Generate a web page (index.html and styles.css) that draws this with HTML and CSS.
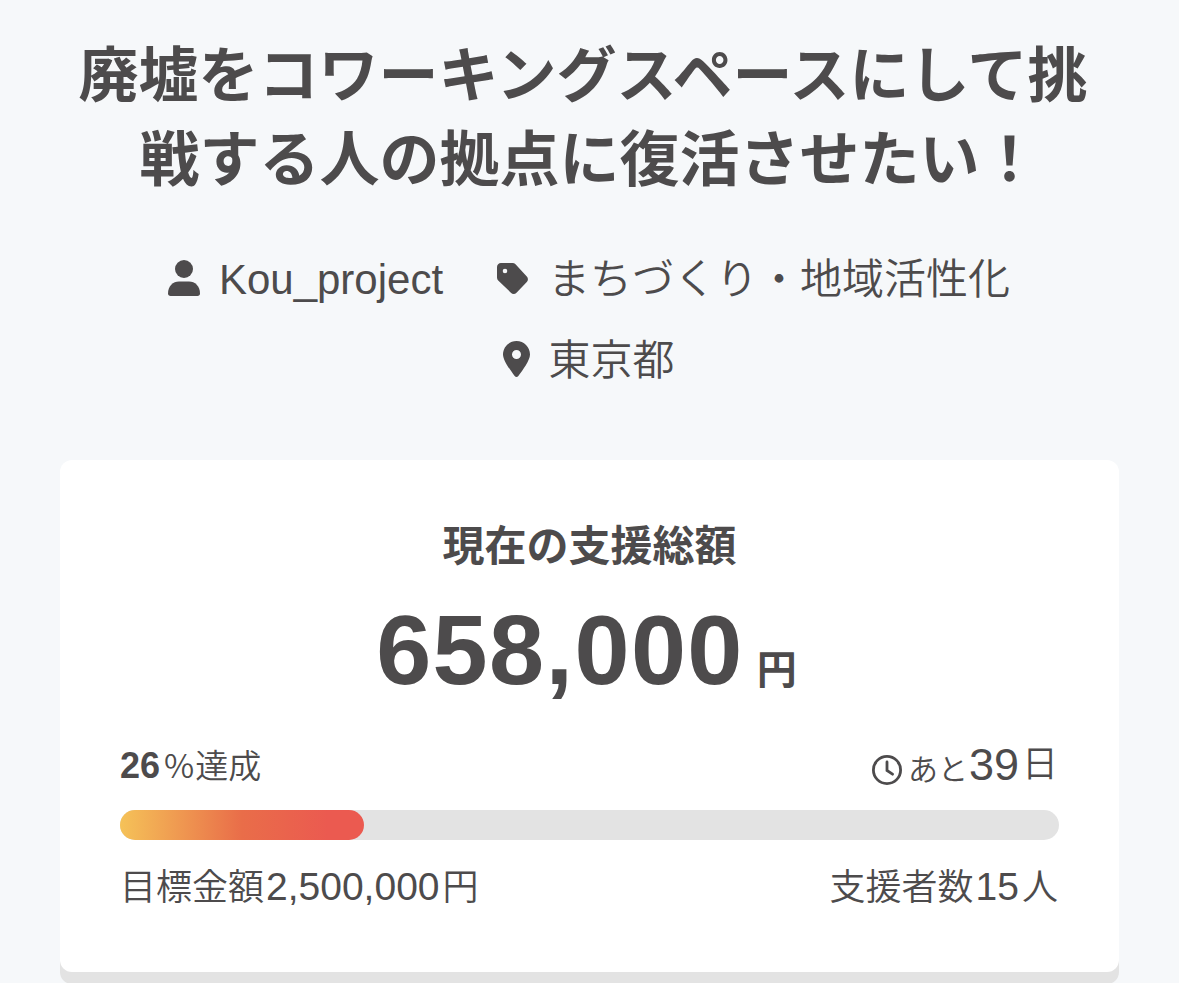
FILE: index.html
```html
<!DOCTYPE html>
<html lang="ja">
<head>
  <meta charset="UTF-8" />
  <title>廃墟をコワーキングスペースにして挑戦する人の拠点に復活させたい！</title>
  <link rel="stylesheet" href="styles.css">
</head>
<body>
  <main class="project">
    <h1 class="project-title"><span class="title-line first">廃墟をコワーキングスペースにして挑</span><span class="title-line">戦する人の拠点に復活させたい！</span></h1>

    <ul class="meta">
      <li class="meta-item owner">
        <svg class="icon-user" viewBox="0 0 32 36"><circle cx="16" cy="9" r="9"/><path d="M0 33.500C0 26 5 21.500 11 21.500h10c6 0 11 4.500 11 12 0 1.500-1 2.500-2.500 2.500h-27C1 36 0 35 0 33.500z"/></svg>
        <span>Kou_project</span>
      </li>
      <li class="meta-item category">
        <svg class="icon-tag" viewBox="0 0 31 31"><path fill-rule="evenodd" d="M4 0h11.500c1.200 0 2.200.400 3 1.200L29.800 13.500c1.500 1.600 1.500 4 0 5.600L19.500 29.700c-1.600 1.600-4 1.600-5.600 0L1.200 17.500C.400 16.700 0 15.700 0 14.500V4c0-2.300 1.700-4 4-4zM8 5.700a2.300 2.300 0 1 0 0 4.600 2.300 2.300 0 0 0 0-4.600z"/></svg>
        <span>まちづくり・地域活性化</span>
      </li>
      <li class="meta-item area">
        <svg class="icon-pin" viewBox="0 0 27 36"><path fill-rule="evenodd" d="M13.500 0C21 0 27 6 27 13.500c0 6-7.500 16-11.700 21.500-1 1.300-2.600 1.300-3.600 0C7.500 29.500 0 19.500 0 13.500 0 6 6 0 13.500 0zm0 9a4.500 4.500 0 1 0 0 9 4.500 4.500 0 0 0 0-9z"/></svg>
        <span>東京都</span>
      </li>
    </ul>

    <section class="card">
      <h2 class="card-title">現在の支援総額</h2>
      <p class="total"><span class="total-number">658,000</span><span class="total-unit">円</span></p>

      <div class="row status">
        <p class="rate"><b>26</b><span class="percent">%</span>達成</p>
        <p class="remain">
          <svg class="icon-clock" viewBox="0 0 30 30"><circle cx="15" cy="15" r="13.600"/><path d="M15 7v8.500l5.500 3.700"/></svg>
          <span class="remain-label">あと</span><span class="remain-number">39</span><span class="remain-unit">日</span>
        </p>
      </div>
      <div class="bar"><div class="bar-fill" style="width: 26%"></div></div>
      <div class="row detail">
        <p>目標金額<span class="number">2,500,000</span>円</p>
        <p class="supporters">支援者数<span class="number">15</span>人</p>
      </div>
    </section>
  </main>
</body>
</html>
```

FILE: styles.css
```css
* {
  box-sizing: border-box;
}

body {
  margin: 0;
  height: 983px;
  overflow: hidden;
  background: #f6f8fa;
  color: #4d4b4c;
  font-family: "Liberation Sans", "Noto Sans CJK JP", sans-serif;
  font-weight: 350;
}

h1, h2, p, ul {
  margin: 0;
  padding: 0;
}

svg {
  display: block;
  flex: none;
  fill: currentColor;
}

.project {
  padding: 35px 60px 0;
}

.project-title {
  font-size: 60px;
  font-weight: 700;
  line-height: 84px;
  text-align: center;
  white-space: nowrap;
}

.title-line {
  display: block;
}

.title-line.first {
  padding-right: 13px;
}

.meta {
  display: flex;
  flex-wrap: wrap;
  justify-content: center;
  column-gap: 54px;
  margin-top: 36px;
  padding-right: 1px;
  font-size: 42px;
  line-height: 81px;
  list-style: none;
}

.meta-item {
  display: flex;
  align-items: center;
}

.meta-item svg {
  margin-bottom: 3px;
}

.icon-user {
  width: 32px;
  height: 36px;
  margin-right: 19px;
}

.icon-tag {
  width: 31px;
  height: 31px;
  margin-right: 20px;
}

.icon-pin {
  width: 27px;
  height: 36px;
  margin-right: 18px;
}

.card {
  height: 512px;
  margin-top: 59px;
  padding: 55px 60px 0;
  background: #fff;
  border-radius: 12px;
  box-shadow: 0 12px 0 #e3e3e3;
}

.card-title {
  font-size: 42px;
  line-height: 64px;
  text-align: center;
}

.total {
  display: flex;
  align-items: baseline;
  justify-content: center;
  height: 120px;
  margin-top: 11px;
  padding-right: 6px;
  font-weight: 700;
  line-height: 120px;
}

.total-number {
  font-size: 99px;
  letter-spacing: 1.4px;
}

.total-unit {
  margin-left: 13px;
  font-size: 40px;
}

.row {
  display: flex;
  justify-content: space-between;
}

.status {
  height: 60px;
  margin-top: 25px;
  margin-bottom: 15px;
  line-height: 60px;
}

.rate {
  margin-top: -1px;
  font-size: 33px;
}

.rate b {
  font-size: 36px;
  font-weight: 700;
}

.percent {
  margin-right: 1px;
  margin-left: 4px;
  font-family: "Noto Sans CJK JP", sans-serif;
}

.remain {
  display: flex;
  align-items: baseline;
  padding-right: 1px;
}

.icon-clock {
  align-self: center;
  width: 30px;
  height: 30px;
  margin-top: 9px;
  margin-right: 6px;
  fill: none;
  stroke: currentColor;
  stroke-width: 2.8;
  stroke-linecap: round;
}

.remain-label {
  font-size: 30px;
}

.remain-number {
  margin-left: 1px;
  font-size: 45px;
}

/* 日 sits a little above the baseline of the count */
.remain-unit {
  align-self: flex-start;
  margin-left: 3px;
  font-size: 36px;
}

.bar {
  height: 30px;
  background: #e3e3e3;
  border-radius: 15px;
}

.bar-fill {
  height: 100%;
  background: linear-gradient(90deg, #f5c258, #e96d49 50%, #eb5a50 85%);
  border-radius: 15px;
}

.detail {
  margin-top: 17px;
  font-size: 36px;
  line-height: 60px;
}

.number {
  margin: 0 3px 0 2px;
  font-size: 39px;
}

.supporters {
  padding-right: 1px;
}
```
